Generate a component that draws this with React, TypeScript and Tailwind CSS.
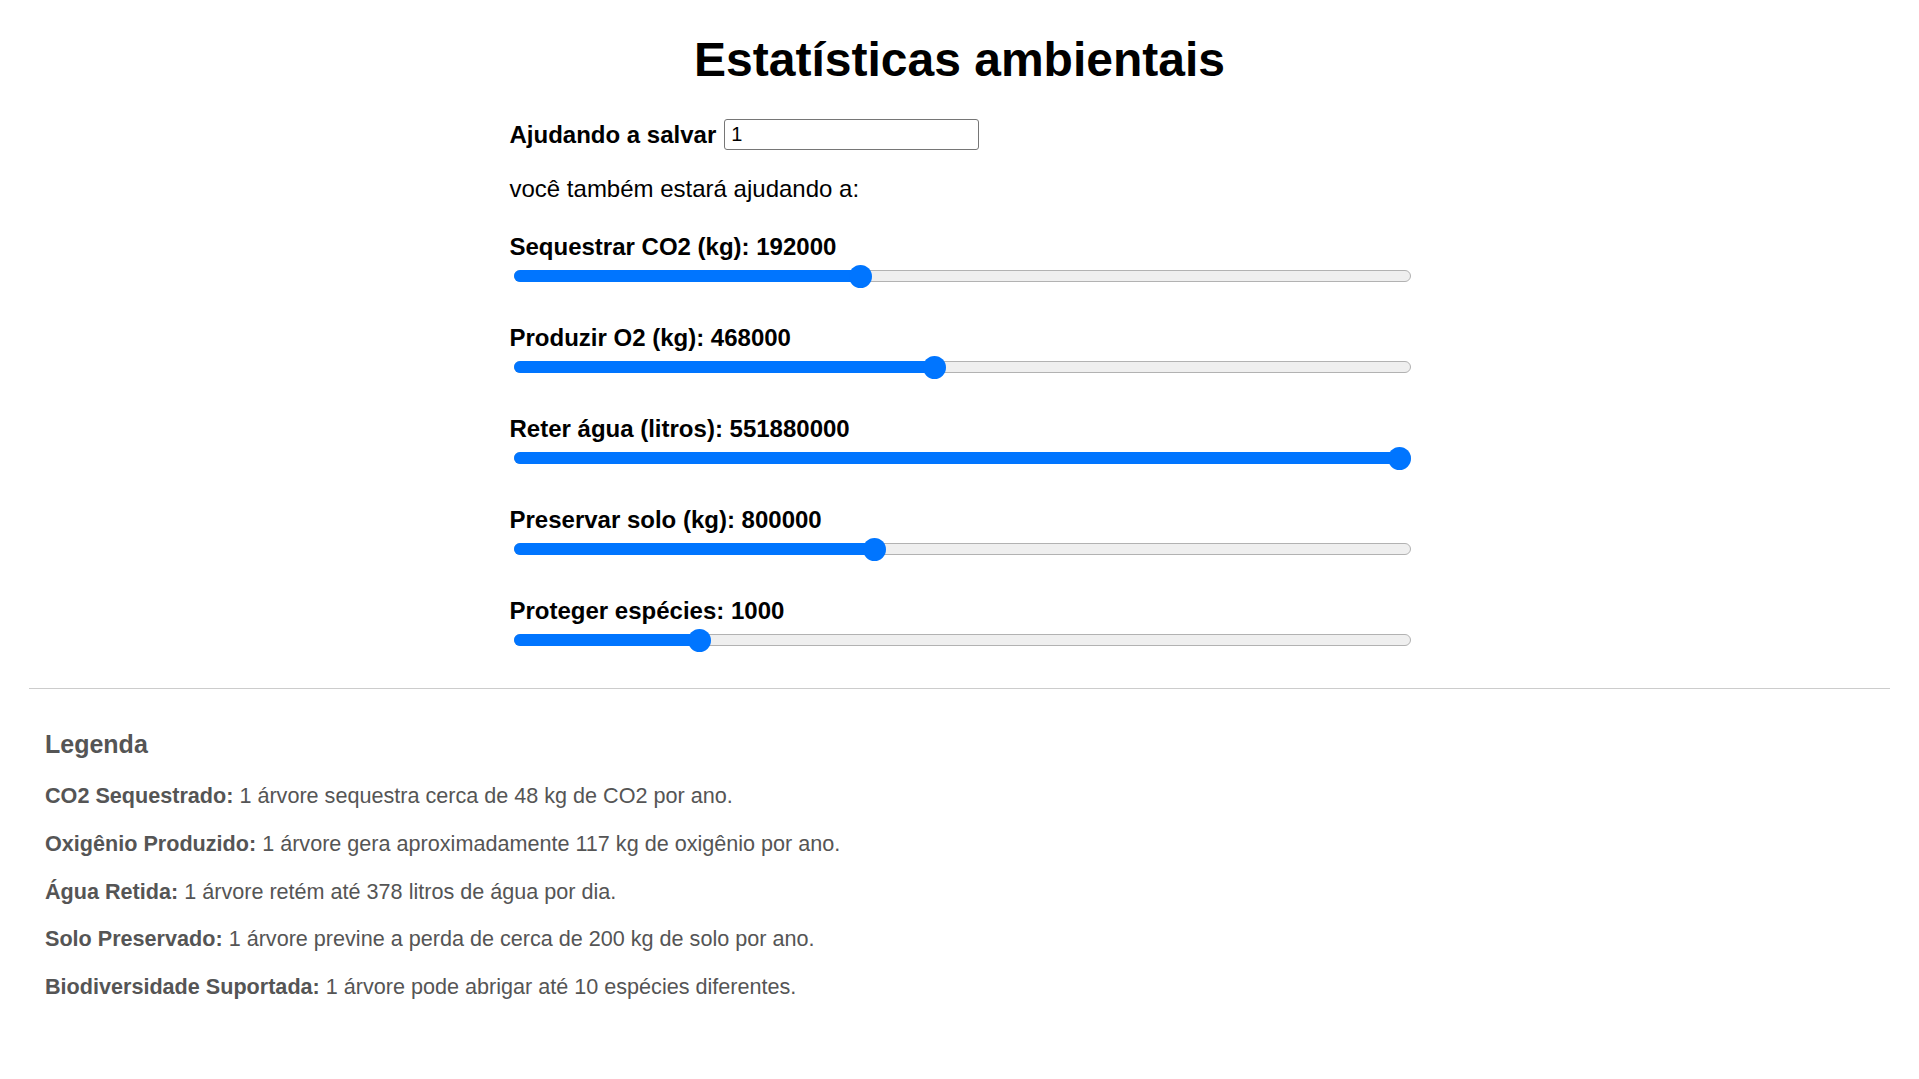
import React from "react";

type SliderItem = { label: string; value: number; max: number };

const sliders: SliderItem[] = [
  { label: "Sequestrar CO2 (kg)", value: 192000, max: 500000 },
  { label: "Produzir O2 (kg)", value: 468000, max: 1000000 },
  { label: "Reter água (litros)", value: 551880000, max: 1000000 },
  { label: "Preservar solo (kg)", value: 800000, max: 2000000 },
  { label: "Proteger espécies", value: 1000, max: 5000 },
];

const legend: { title: string; text: string }[] = [
  { title: "CO2 Sequestrado:", text: "1 árvore sequestra cerca de 48 kg de CO2 por ano." },
  { title: "Oxigênio Produzido:", text: "1 árvore gera aproximadamente 117 kg de oxigênio por ano." },
  { title: "Água Retida:", text: "1 árvore retém até 378 litros de água por dia." },
  { title: "Solo Preservado:", text: "1 árvore previne a perda de cerca de 200 kg de solo por ano." },
  { title: "Biodiversidade Suportada:", text: "1 árvore pode abrigar até 10 espécies diferentes." },
];

const TRACK_W = 897;
const THUMB = 23;

function Slider({ value, max }: { value: number; max: number }) {
  const frac = Math.max(0, Math.min(1, value / max));
  const center = THUMB / 2 + frac * (TRACK_W - THUMB);
  return (
    <div className="relative ml-[4px] h-[31px] w-[897px]">
      <div className="absolute left-0 right-0 top-[9px] h-[12px] rounded-full border border-[#b2b2b2] bg-[#efefef]" />
      <div
        className="absolute left-0 top-[9px] h-[12px] rounded-full bg-[#0075ff]"
        style={{ width: `${center}px` }}
      />
      <div
        className="absolute top-[3.5px] h-[23px] w-[23px] rounded-full bg-[#0075ff]"
        style={{ left: `${center - THUMB / 2}px` }}
      />
    </div>
  );
}

export default function App() {
  return (
    <div className="min-h-screen bg-white font-['Liberation_Sans',Arial,sans-serif] text-black">
      <h1 className="pt-[32px] text-center text-[48px] font-bold leading-[55px]">
        Estatísticas ambientais
      </h1>

      <div className="mx-auto w-[900px]">
        <div className="mt-[32px] flex h-[31px] items-center">
          <span className="text-[24px] font-bold leading-[28px]">Ajudando a salvar</span>
          <input
            type="text"
            defaultValue="1"
            className="ml-[8px] h-[31px] w-[255px] rounded-[3px] border border-[#767676] px-[6px] text-[20px] text-black outline-none"
          />
        </div>

        <p className="mt-[25px] text-[24px] leading-[28px]">você também estará ajudando a:</p>

        <div className="mt-[29px] flex flex-col gap-[31px]">
          {sliders.map((s) => (
            <div key={s.label} className="flex flex-col">
              <label className="pt-[1px] text-[24px] font-bold leading-[28px]">
                {s.label}: {s.value}
              </label>
              <Slider value={s.value} max={s.max} />
            </div>
          ))}
        </div>
      </div>

      <div className="mx-[29px] mt-[32px] border-t border-[#cccccc]" />

      <div className="px-[45px] pb-[60px] text-[#555555]">
        <h3 className="mt-[41px] text-[25px] font-bold leading-[29px]">Legenda</h3>
        <div className="mt-[24px] flex flex-col gap-[22.8px]">
          {legend.map((l) => (
            <p key={l.title} className="text-[21.6px] leading-[25px]">
              <strong className="font-bold">{l.title}</strong> {l.text}
            </p>
          ))}
        </div>
      </div>
    </div>
  );
}
